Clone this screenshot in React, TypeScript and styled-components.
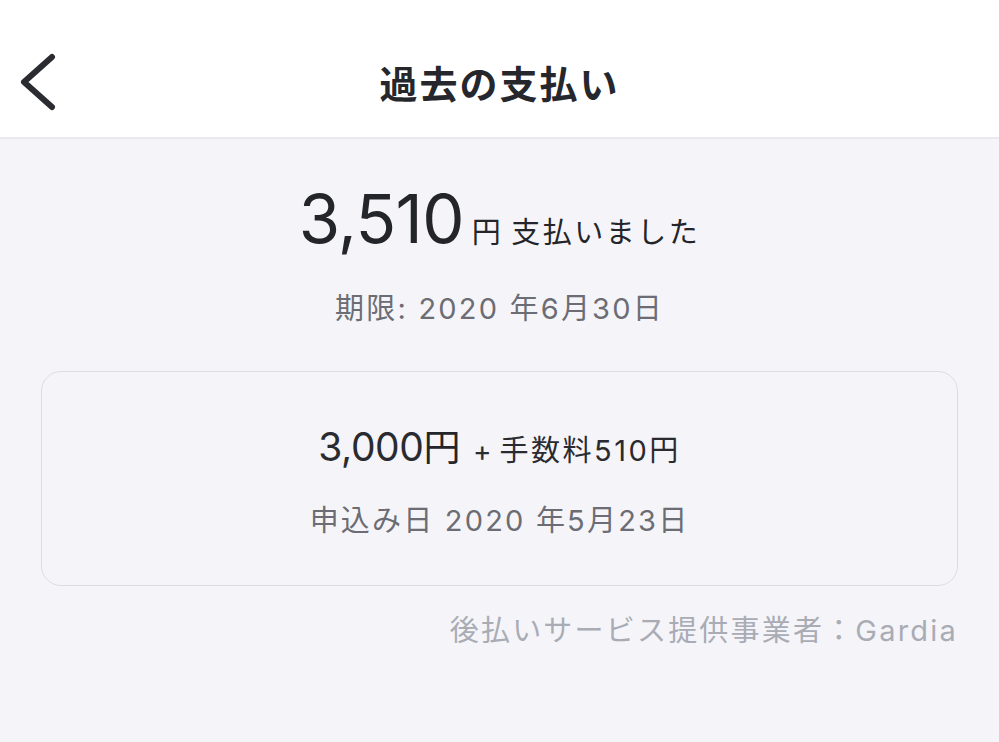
import styled, {createGlobalStyle} from "styled-components"

const GlobalStyle = createGlobalStyle`
  html, body {
    margin: 0;
    padding: 0;
    background: #f5f5f9;
    font-family: Inter, "Noto Sans CJK JP", sans-serif;
    color: #2a2b30;
  }
`
const Page = styled.div`
  width: 999px;
  height: 742px;
  background: #f5f5f9;
  display: flex;
  flex-direction: column;
`
const Header = styled.header`
  height: 139px;
  box-sizing: border-box;
  padding-top: 26px;
  background: #fff;
  border-bottom: 2px solid #e9e9f0;
  display: grid;
  grid-template-columns: 90px 1fr 90px;
  align-items: center;
`
const BackButton = styled.button`
  background: 0 0;
  border: 0;
  padding: 0 0 0 16px;
  margin: 0;
  height: 60px;
  display: flex;
  align-items: center;
  cursor: pointer;
`
const Title = styled.h1`
  margin: 0;
  text-align: center;
  font-family: "Noto Sans CJK JP", sans-serif;
  font-size: 38px;
  font-weight: 700;
  letter-spacing: 2px;
  color: #26272c;
`
const Body = styled.main`
  display: flex;
  flex-direction: column;
  align-items: center;
  padding: 46px 41px 0;
`
const Total = styled.div`
  display: flex;
  align-items: baseline;
  gap: 8px;
  line-height: 1;
`
const TotalNumber = styled.span`
  font-size: 67px;
  letter-spacing: -.01em;
  color: #24252a;
`
const Unit = styled.span<{$size: number}>`
  font-size: ${p => p.$size}px;
  letter-spacing: 2.5px;
  color: #24252a;
`
const Caption = styled.div<{$color?: string}>`
  font-size: 29px;
  line-height: 1.2;
  color: ${p => p.$color || '#6c6d74'};
  letter-spacing: 2.2px;
`
const DueDate = styled(Caption)`
  margin-top: 40px;
`
const Card = styled.section`
  width: 100%;
  box-sizing: border-box;
  margin-top: 44px;
  height: 215px;
  padding-top: 10px;
  border: 1.5px solid #dcdce2;
  border-radius: 20px;
  display: flex;
  flex-direction: column;
  align-items: center;
  justify-content: center;
  gap: 38px;
`
const Breakdown = styled.div`
  display: flex;
  align-items: baseline;
  line-height: 1;
  color: #2a2b30;
`
const Amount = styled.span`
  font-size: 39px;
  letter-spacing: -.01em;
`
const Plus = styled.span`
  font-size: 28px;
  margin: 0 8px 0 10px;
`
const Fee = styled.span`
  font-size: 29px;
  letter-spacing: 2.5px;
`
const Footer = styled.div`
  align-self: flex-end;
  margin-top: 28px;
  font-size: 29px;
  line-height: 1.2;
  color: #a9acb5;
  letter-spacing: 2.2px;
`

export default function App() {
  return <Page>
    <GlobalStyle/>
    <Header>
      <BackButton aria-label="戻る">
        <svg width="42" height="58" viewBox="0 0 42 58" fill="none">
          <path d="M36 4 L8 29 L36 54" stroke="#2b2c31" strokeWidth="6" strokeLinecap="round" strokeLinejoin="round"/>
        </svg>
      </BackButton>
      <Title>過去の支払い</Title>
      <div/>
    </Header>
    <Body>
      <Total>
        <TotalNumber>3,510</TotalNumber>
        <Unit $size={29}>円</Unit>
        <Unit $size={29}>支払いました</Unit>
      </Total>
      <DueDate>期限: 2020 年6月30日</DueDate>
      <Card>
        <Breakdown>
          <Amount>3,000</Amount>
          <Unit $size={37}>円</Unit>
          <Plus>+</Plus>
          <Fee>手数料510円</Fee>
        </Breakdown>
        <Caption>申込み日 2020 年5月23日</Caption>
      </Card>
      <Footer>後払いサービス提供事業者：Gardia</Footer>
    </Body>
  </Page>
}
